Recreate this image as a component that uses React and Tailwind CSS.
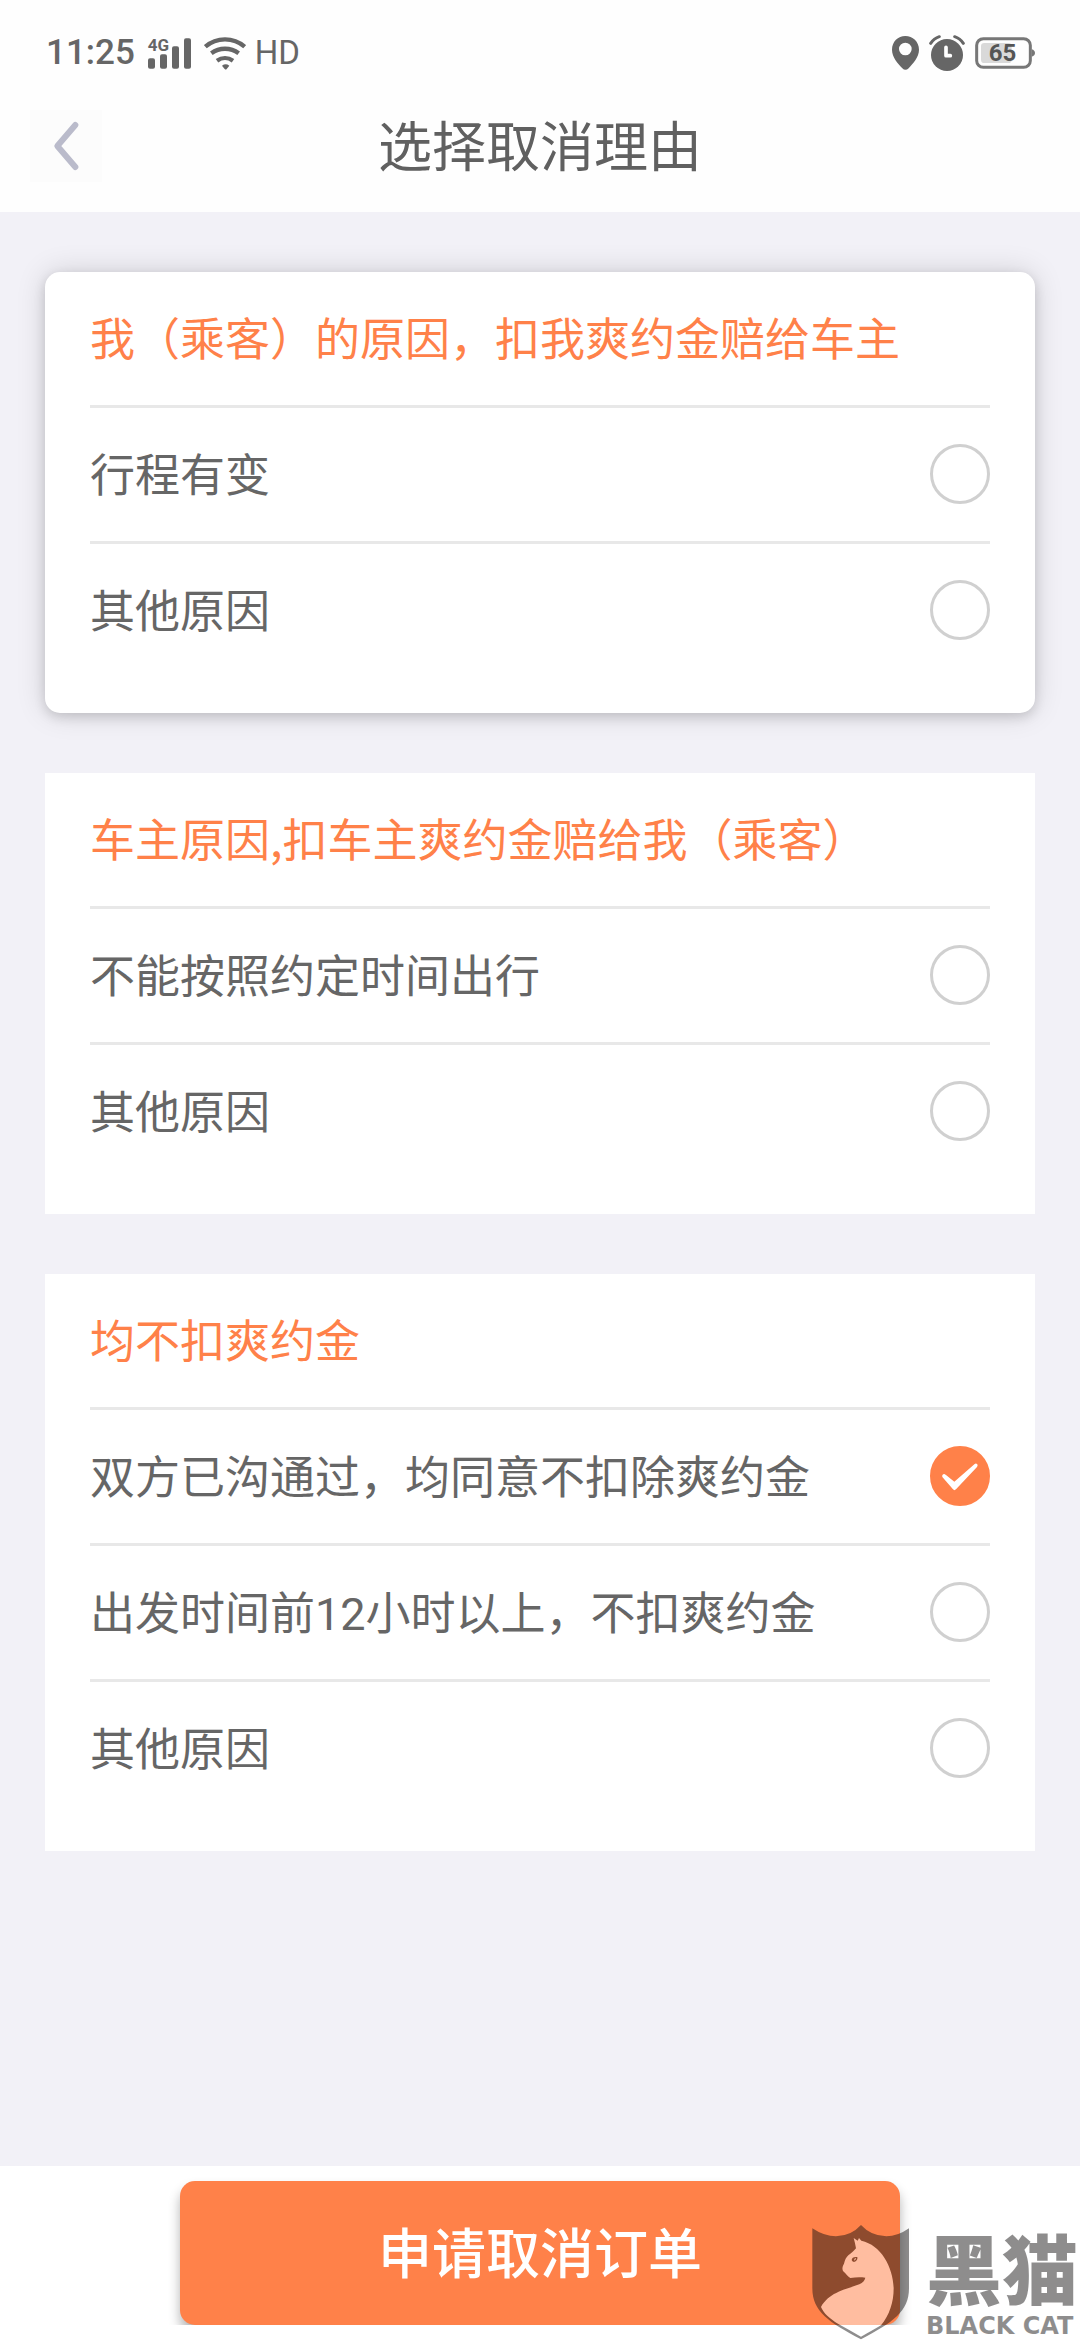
import { useState } from 'react';

const groups = [
  {
    title: '我（乘客）的原因，扣我爽约金赔给车主',
    raised: true,
    options: [
      { id: 'passenger-change', label: '行程有变' },
      { id: 'passenger-other', label: '其他原因' },
    ],
  },
  {
    title: '车主原因,扣车主爽约金赔给我（乘客）',
    options: [
      { id: 'driver-time', label: '不能按照约定时间出行' },
      { id: 'driver-other', label: '其他原因' },
    ],
  },
  {
    title: '均不扣爽约金',
    options: [
      { id: 'none-agreed', label: '双方已沟通过，均同意不扣除爽约金' },
      {
        id: 'none-early',
        label: (
          <>
            出发时间前<span className="font-['Roboto'] leading-none">12</span>小时以上，不扣爽约金
          </>
        ),
      },
      { id: 'none-other', label: '其他原因' },
    ],
  },
];

function SignalIcon() {
  return (
    <span className="relative block">
      <svg viewBox="0 0 129 93" className="h-[31px] w-[43px]" fill="currentColor" aria-hidden="true">
        <rect x="0" y="61" width="21" height="31" rx="6" />
        <rect x="36" y="49" width="21" height="43" rx="6" />
        <rect x="72" y="25" width="21" height="67" rx="6" />
        <rect x="108" y="1" width="21" height="91" rx="6" />
      </svg>
      <span className="absolute left-0 top-0 text-[17px] font-bold leading-[14px]">4G</span>
    </span>
  );
}

function WifiIcon() {
  return (
    <svg viewBox="0 0 126 99" className="h-[33px] w-[42px]" fill="none" stroke="currentColor" strokeWidth="13" aria-hidden="true">
      <path d="M4 29 A90 90 0 0 1 122 29" />
      <path d="M22 49 A68 68 0 0 1 104 49" />
      <path d="M39 71 A42 42 0 0 1 87 71" />
      <path d="M54 86 Q65 78 76 86 L68 96 Q65 99 62 96 Z" fill="currentColor" stroke="none" />
    </svg>
  );
}

function PinIcon() {
  return (
    <svg viewBox="0 0 81 102" className="h-[34px] w-[27px]" fill="currentColor" aria-hidden="true">
      <path
        fillRule="evenodd"
        d="M40 0 C62 0 81 17 81 41 C81 64 62 83 50 97 Q40 106 31 97 C18 83 0 64 0 41 C0 17 18 0 40 0 Z M40 20 A19 19 0 1 0 40 58 A19 19 0 1 0 40 20 Z"
      />
    </svg>
  );
}

function AlarmIcon() {
  return (
    <svg viewBox="0 0 108 108" className="size-9" fill="none" strokeLinecap="round" aria-hidden="true">
      <circle cx="54" cy="60" r="48" fill="currentColor" />
      <path d="M5 25 Q15 10 31 5 M77 5 Q93 10 103 25" stroke="currentColor" strokeWidth="9" />
      <path d="M51 37 V62 H64" stroke="#fff" strokeWidth="11" strokeLinejoin="round" />
    </svg>
  );
}

function Battery() {
  return (
    <span className="relative flex h-8 w-[60px] items-center justify-center pr-[5px]">
      <svg viewBox="0 0 180 96" className="absolute inset-0 h-8 w-[60px]" fill="none" aria-hidden="true">
        <rect x="5" y="5" width="161" height="86" rx="20" stroke="#777" strokeWidth="9" />
        <rect x="18" y="18" width="92" height="60" rx="10" fill="#d9d9d9" />
        <path d="M170 37 Q180 40 180 48 Q180 56 170 59 Z" fill="#777" />
      </svg>
      <span className="relative text-2xl font-bold leading-8 text-[#555]">65</span>
    </span>
  );
}

function Option({ id, label, checked, onSelect }) {
  return (
    <label className="flex h-[136px] cursor-pointer items-center justify-between border-t-3 border-[#e8e8e8] pb-px text-[#666]">
      <span className="pb-[2px]">{label}</span>
      <span className="grid">
        <input
          type="radio"
          name="reason"
          value={id}
          checked={checked}
          onChange={() => onSelect(id)}
          className="peer col-start-1 row-start-1 size-[60px] appearance-none rounded-full border-3 border-[#d0d0d0] checked:border-[#ff8149] checked:bg-[#ff8149]"
        />
        <svg viewBox="0 0 180 180" className="pointer-events-none invisible col-start-1 row-start-1 size-[60px] peer-checked:visible" fill="#fff" aria-hidden="true">
          <path d="M37 93 Q35 85 43 84 L48 87 L73 107 L134 54 Q138 51 142 55 Q144 60 141 63 L78 130 Q73 135 69 130 Z" />
        </svg>
      </span>
    </label>
  );
}

function Watermark() {
  return (
    <div className="pointer-events-none absolute bottom-0 right-0 flex items-end gap-4 pr-[2px] text-[#141212] opacity-48">
      <svg viewBox="90 189 297 351" className="h-[117px] w-[99px]" aria-hidden="true">
        <path
          fill="currentColor"
          d="M94 205 Q130 229 165 229 Q210 228 240 195 Q270 228 316 229 Q350 229 384 205 V385 C384 455 335 488 240 538 C145 488 94 455 94 385 Z"
        />
        <path
          fill="#fff"
          d="M120 441 C145 395 200 387 235 373 C246 368 251 361 253 353 C240 351 225 351 208 354 C200 350 197 343 186 333 C183 326 184 320 189 311 C192 300 195 292 202 286 C212 278 219 273 225 265 Q222 248 218 234 L230 242 L234 234 L241 242 C300 255 336 320 338 385 C338 428 325 466 300 496 Q275 511 240 530 Q205 510 172 492 C145 475 128 460 120 441 Z"
        />
        <path fill="currentColor" fillRule="evenodd" d="M212 300 Q213 289 229 291 Q231 302 219 306 Q213 305 212 300 Z M219 302 Q226 299 225 293 Q219 295 219 302 Z" />
      </svg>
      <div className="flex flex-col gap-[10px] pb-[2px]">
        <span className="font-['Noto_Sans_CJK_SC',sans-serif] text-[76px] font-black leading-[76px]">黑猫</span>
        <span className="font-['DejaVu_Sans',sans-serif] text-2xl font-bold leading-6">BLACK CAT</span>
      </div>
    </div>
  );
}

export default function App() {
  const [selected, setSelected] = useState('none-agreed');

  return (
    <div className="flex min-h-screen flex-col bg-[#f2f1f7] font-['Noto_Sans_CJK_SC',sans-serif]">
      <header className="bg-[#fefefe]">
        <div className="flex h-20 items-center justify-between pl-[46px] pr-[45px] pt-[26px] font-['Roboto',sans-serif] text-[#666]">
          <div className="flex items-center gap-[13px]">
            <span className="text-[35px] font-medium leading-10">11:25</span>
            <SignalIcon />
            <WifiIcon />
            <span className="-ml-1 text-[33px] leading-10">HD</span>
          </div>
          <div className="flex items-center gap-[10px]">
            <PinIcon />
            <AlarmIcon />
            <Battery />
          </div>
        </div>
        <div className="grid h-[132px] grid-cols-[72px_1fr_72px] items-center px-[30px]">
          <button type="button" aria-label="返回" className="size-[72px] bg-[#fcfcfc]">
            <svg viewBox="0 0 216 216" className="size-[72px]" fill="none" stroke="#babbcb" strokeWidth="18" strokeLinecap="round" strokeLinejoin="round" aria-hidden="true">
              <path d="M136 45 L82 108 L136 171" />
            </svg>
          </button>
          <h1 className="pb-1 text-center text-[54px] leading-[72px] text-[#606060]">选择取消理由</h1>
        </div>
      </header>

      <main className="flex flex-col gap-[60px] px-[45px] py-[60px] text-[45px] leading-[66px]">
        {groups.map((group) => (
          <section
            key={group.title}
            className={
              group.raised
                ? 'rounded-[15px] bg-white px-[45px] pb-9 shadow-[0_4px_12px_rgba(0,0,0,0.14),0_0_30px_rgba(0,0,0,0.14)]'
                : 'bg-white px-[45px] pb-9'
            }
          >
            <h2 className="flex h-[133px] items-center pb-1 text-[#ff8149]">{group.title}</h2>
            {group.options.map((option) => (
              <Option
                key={option.id}
                id={option.id}
                label={option.label}
                checked={selected === option.id}
                onSelect={setSelected}
              />
            ))}
          </section>
        ))}
      </main>

      <footer className="relative mt-auto bg-white pb-[15px]">
        <div className="flex justify-center overflow-hidden pt-[15px]">
          <button
            type="button"
            className="h-36 w-2/3 rounded-[15px] bg-[#ff8149] pb-1 text-[54px] font-medium leading-[72px] text-white shadow-[0_8px_12px_rgba(0,0,0,0.3)]"
          >
            申请取消订单
          </button>
        </div>
        <Watermark />
      </footer>
    </div>
  );
}
